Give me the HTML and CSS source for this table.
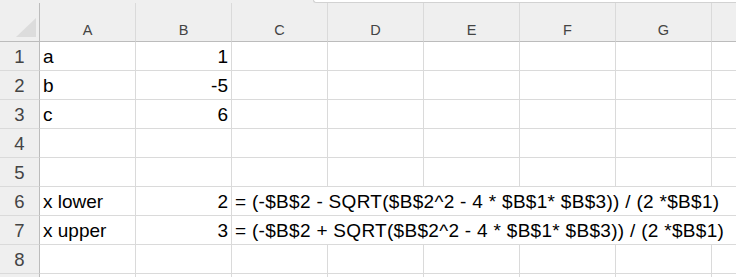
FILE: index.html
```html
<!DOCTYPE html>
<html>
<head>
<meta charset="utf-8">
<link rel="stylesheet" href="styles.css">
</head>
<body>
<div class="strip"><div class="strip-left"></div><div class="strip-tab"></div></div>
<div class="sheet">
  <div class="hdr corner"><svg class="tri" width="22" height="20" viewBox="0 0 22 20"><polygon points="0,19 20,19 20,0" fill="#dcdcdc"/></svg></div>
  <div class="hdr col">A</div><div class="hdr col">B</div><div class="hdr col">C</div><div class="hdr col">D</div><div class="hdr col">E</div><div class="hdr col">F</div><div class="hdr col">G</div><div class="hdr col last"></div>

  <div class="rh">1</div><div class="c">a</div><div class="c num">1</div><div class="c"></div><div class="c"></div><div class="c"></div><div class="c"></div><div class="c"></div><div class="c last"></div>
  <div class="rh">2</div><div class="c">b</div><div class="c num">-5</div><div class="c"></div><div class="c"></div><div class="c"></div><div class="c"></div><div class="c"></div><div class="c last"></div>
  <div class="rh">3</div><div class="c">c</div><div class="c num">6</div><div class="c"></div><div class="c"></div><div class="c"></div><div class="c"></div><div class="c"></div><div class="c last"></div>
  <div class="rh">4</div><div class="c"></div><div class="c"></div><div class="c"></div><div class="c"></div><div class="c"></div><div class="c"></div><div class="c"></div><div class="c last"></div>
  <div class="rh">5</div><div class="c"></div><div class="c"></div><div class="c"></div><div class="c"></div><div class="c"></div><div class="c"></div><div class="c"></div><div class="c last"></div>
  <div class="rh">6</div><div class="c">x lower</div><div class="c num">2</div><div class="c span">= (-$B$2 - SQRT($B$2^2 - 4 * $B$1* $B$3)) / (2 *$B$1)</div>
  <div class="rh">7</div><div class="c">x upper</div><div class="c num">3</div><div class="c span">= (-$B$2 + SQRT($B$2^2 - 4 * $B$1* $B$3)) / (2 *$B$1)</div>
  <div class="rh">8</div><div class="c"></div><div class="c"></div><div class="c"></div><div class="c"></div><div class="c"></div><div class="c"></div><div class="c"></div><div class="c last"></div>
  <div class="rh"></div><div class="c"></div><div class="c"></div><div class="c"></div><div class="c"></div><div class="c"></div><div class="c"></div><div class="c"></div><div class="c last"></div>
</div>
</body>
</html>
```

FILE: styles.css
```css
html, body {
  margin: 0;
  padding: 0;
  background: #ffffff;
  overflow: hidden;
}
body {
  width: 736px;
  height: 277px;
  font-family: "Liberation Sans", Arial, sans-serif;
}
.strip {
  display: flex;
  height: 3px;
  background: #efefef;
}
.strip-left {
  width: 313px;
}
.strip-tab {
  flex: 1;
  background: #ffffff;
  border-bottom: 1px solid #d2d2d2;
  border-left: 1px solid #d2d2d2;
  border-bottom-left-radius: 3px;
  box-sizing: border-box;
}
.sheet {
  display: grid;
  grid-template-columns: 40px repeat(7, 96px) 1fr;
  grid-template-rows: 39px;
  grid-auto-rows: 29px;
}
.hdr {
  background: #efefef;
  box-sizing: border-box;
  border-bottom: 1px solid #bcbcbc;
  border-right: 1px solid #dadada;
  color: #444444;
  font-size: 14.5px;
  text-align: center;
  line-height: 16px;
  padding-top: 19px;
}
.corner {
  border-right: 1px solid #bcbcbc;
  position: relative;
  padding: 0;
}
.tri {
  position: absolute;
  left: 16px;
  top: 15px;
}
.hdr.last {
  border-right: none;
}
.rh {
  background: #efefef;
  box-sizing: border-box;
  border-right: 1px solid #bcbcbc;
  border-bottom: 1px solid #dadada;
  color: #444444;
  font-size: 18.5px;
  text-align: center;
  line-height: 28px;
  padding-top: 1px;
}
.c {
  box-sizing: border-box;
  border-right: 1px solid #dadada;
  border-bottom: 1px solid #dadada;
  color: #000000;
  font-size: 19px;
  line-height: 28px;
  padding: 1px 3px 0 3px;
  white-space: nowrap;
}
.c.num {
  text-align: right;
}
.c.span {
  grid-column: 4 / -1;
  border-right: none;
  letter-spacing: 0.3px;
}
.c.last {
  border-right: none;
}
```
